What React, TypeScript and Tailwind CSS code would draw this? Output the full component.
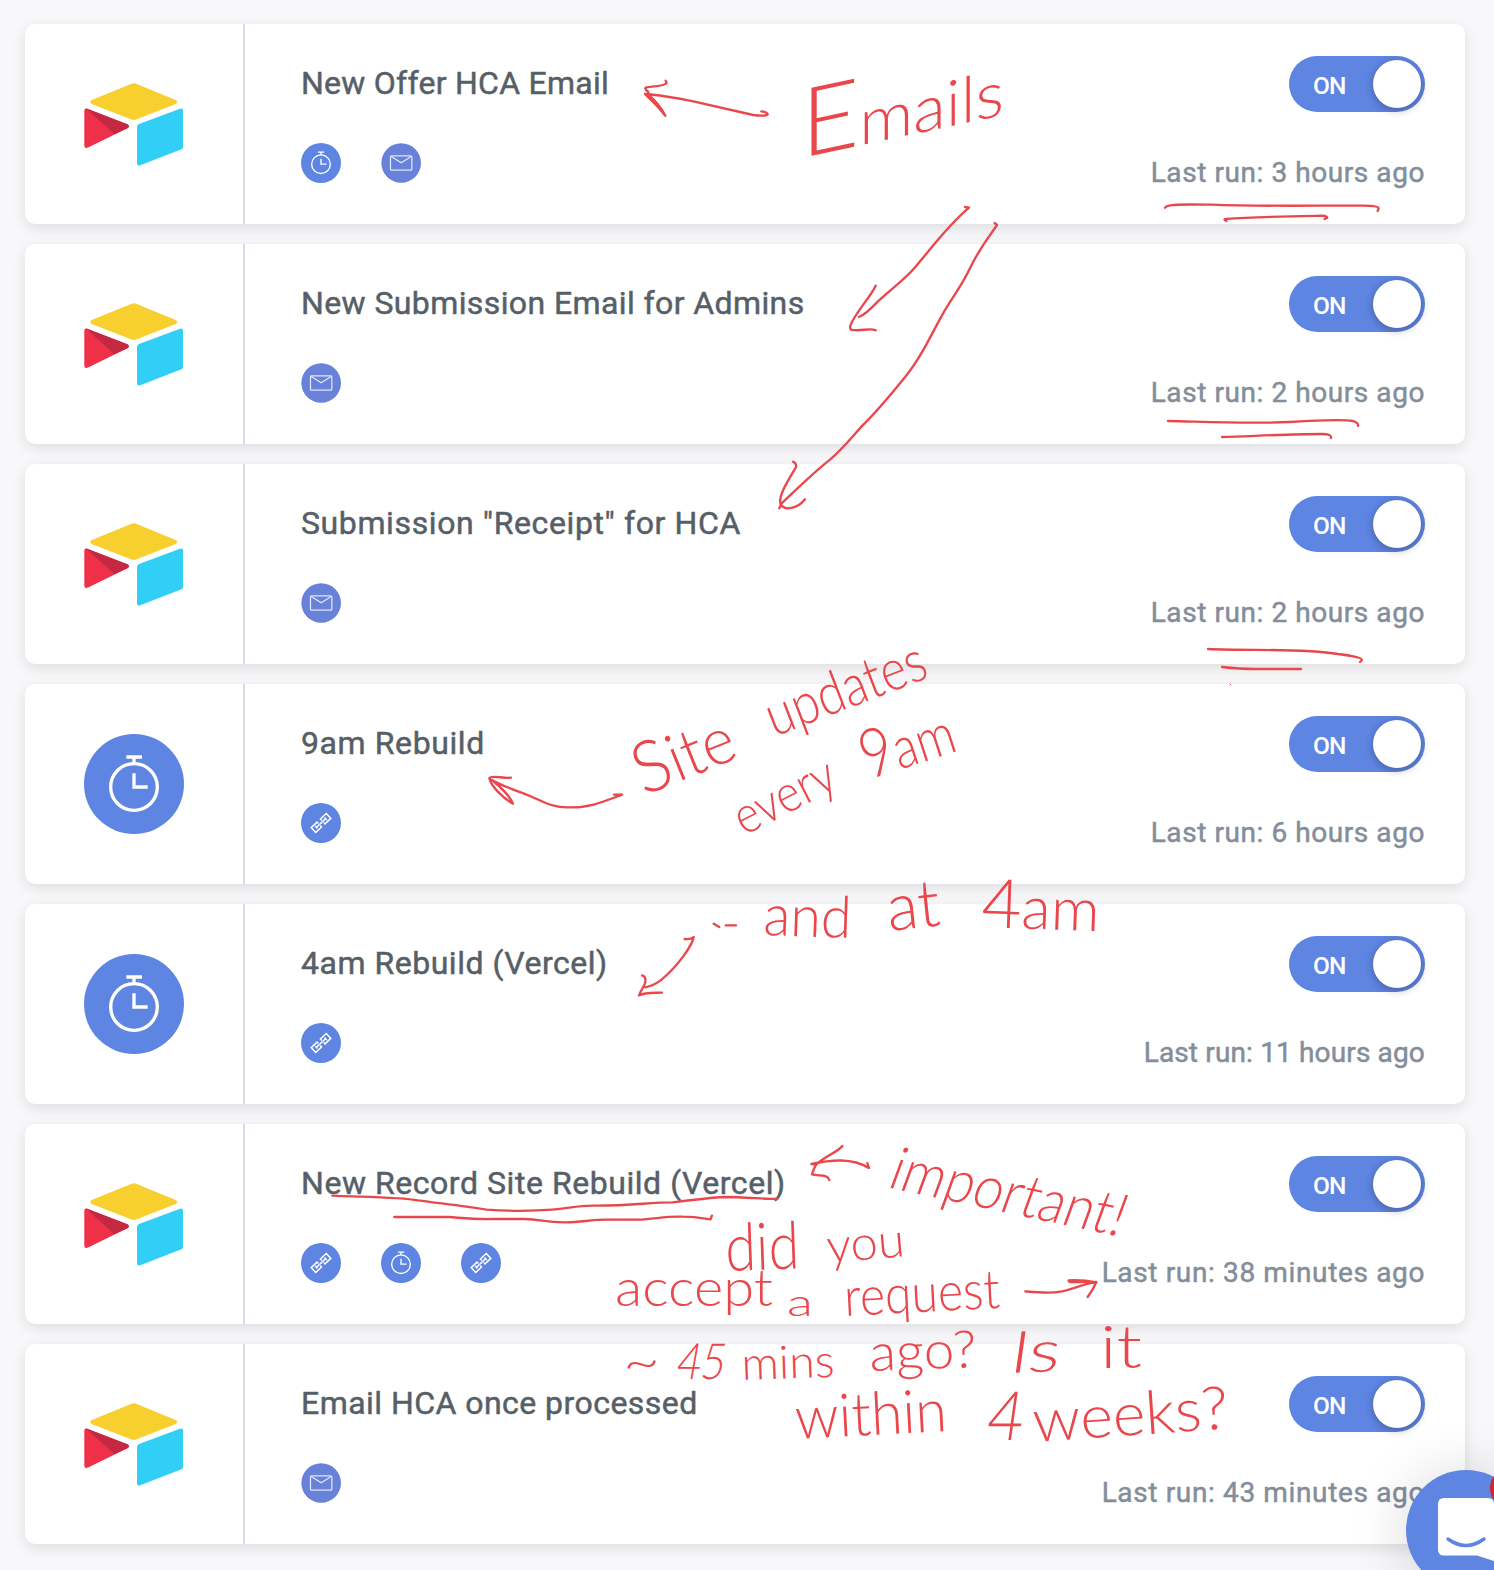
import React from "react";

type IconName = "timer" | "mail" | "link";

type Automation = {
  title: string;
  tracking: string;
  source: "airtable" | "timer";
  steps: IconName[];
  lastRun: string;
  runTracking: string;
};

const automations: Automation[] = [
  { title: "New Offer HCA Email", tracking: "tracking-[0.26px]", source: "airtable", steps: ["timer", "mail"], lastRun: "3 hours ago", runTracking: "tracking-[0.57px]" },
  { title: "New Submission Email for Admins", tracking: "tracking-[0.4px]", source: "airtable", steps: ["mail"], lastRun: "2 hours ago", runTracking: "tracking-[0.57px]" },
  { title: 'Submission "Receipt" for HCA', tracking: "tracking-[0.61px]", source: "airtable", steps: ["mail"], lastRun: "2 hours ago", runTracking: "tracking-[0.57px]" },
  { title: "9am Rebuild", tracking: "tracking-[0.6px]", source: "timer", steps: ["link"], lastRun: "6 hours ago", runTracking: "tracking-[0.57px]" },
  { title: "4am Rebuild (Vercel)", tracking: "tracking-[0.52px]", source: "timer", steps: ["link"], lastRun: "11 hours ago", runTracking: "tracking-[0.15px]" },
  { title: "New Record Site Rebuild (Vercel)", tracking: "tracking-[0.55px]", source: "airtable", steps: ["link", "timer", "link"], lastRun: "38 minutes ago", runTracking: "tracking-[0.64px]" },
  { title: "Email HCA once processed", tracking: "tracking-[0.46px]", source: "airtable", steps: ["mail"], lastRun: "43 minutes ago", runTracking: "tracking-[0.64px]" },
];

function AirtableLogo() {
  return (
    <svg className="mr-[2px] h-[85px] w-[101px]" viewBox="250 245 303 255">
      <path d="M394 251Q402 247 411 251L528 299Q537 305 528 311L411 357Q402 361 394 357L276 311Q267 305 276 299Z" fill="#f7d02f" />
      <path d="M412 380Q412 374 418 371L541 325Q550 322 550 331V440Q550 445 545 447L422 495Q412 498 412 489Z" fill="#31cff6" />
      <path d="M254 331Q254 322 263 325L383 372Q393 378 383 384L267 441Q254 446 254 436Z" fill="#ee3048" />
      <path d="M258 324L383 372Q393 378 383 384L344 402Z" fill="#c52843" />
    </svg>
  );
}

function TimerIcon({ className }: { className: string }) {
  return (
    <svg className={className} viewBox="72 42 300 300" fill="none" stroke="#fff" strokeWidth="10">
      <circle cx="222" cy="192" r="150" fill="#5f85e2" stroke="none" />
      <circle cx="222" cy="201" r="70" />
      <path d="M199 111H246M222 111V132M222 160V201H263" />
    </svg>
  );
}

function MailIcon({ className }: { className: string }) {
  return (
    <svg className={className} viewBox="1143.500 429 120 120" fill="none" stroke="#dfe5fa" strokeWidth="3.8">
      <circle cx="1204" cy="489" r="59.500" fill="#6882d9" stroke="none" />
      <rect x="1172" y="467.500" width="64" height="43" rx="3" />
      <path d="M1173 469L1204 488L1235 469" />
    </svg>
  );
}

function LinkIcon({ className }: { className: string }) {
  return (
    <svg className={className} viewBox="-60 -60 120 120" fill="none" stroke="#fff" strokeWidth="4.4">
      <circle r="60" fill="#5f85e2" stroke="none" />
      <g transform="rotate(-43)">
        <path d="M-7 -4V-10H-31V10H-7V4M7 -4V-10H31V10H7V4M-19 0H-6M6 0H19M-5 0H5" />
        <path d="M-19 -5V5M19 -5V5" />
      </g>
    </svg>
  );
}

function StepIcon({ name }: { name: IconName }) {
  if (name === "timer") return <TimerIcon className="size-10" />;
  if (name === "mail") return <MailIcon className="size-10" />;
  return <LinkIcon className="size-10" />;
}

function Toggle() {
  return (
    <div className="flex h-14 w-[136px] items-center justify-between rounded-full bg-[#5f85e2] pr-1 pl-6">
      <span className="pt-1 text-[24.5px] leading-none font-medium tracking-[-0.9px] text-white">ON</span>
      <span className="size-12 rounded-full bg-white shadow-[0_2px_8px_rgba(0,0,0,0.3)]" />
    </div>
  );
}

function AutomationCard({ item }: { item: Automation }) {
  return (
    <article className="flex h-[200px] rounded-[10px] bg-white shadow-[0_4px_14px_rgba(0,0,0,0.11)]">
      <div className="flex w-[220px] items-center justify-center border-r-2 border-[#d3dde5]">
        {item.source === "airtable" ? <AirtableLogo /> : <TimerIcon className="size-[100px]" />}
      </div>
      <div className="flex flex-1 justify-between pr-10 pl-14">
        <div className="flex flex-col pt-10">
          <h2 className={"h-[79px] text-[32px] leading-[38px] whitespace-nowrap text-[#565f68] [-webkit-text-stroke:0.5px_#565f68] " + item.tracking}>{item.title}</h2>
          <div className="flex gap-10">
            {item.steps.map((s, i) => (
              <StepIcon key={i} name={s} />
            ))}
          </div>
        </div>
        <div className="flex flex-col items-end pt-8">
          <Toggle />
          <p className={"mt-[44px] text-[28px] leading-[33px] whitespace-nowrap text-[#838e9a] [-webkit-text-stroke:0.5px_#838e9a] " + item.runTracking}>Last run: {item.lastRun}</p>
        </div>
      </div>
    </article>
  );
}

// "lead" enlarges the first letter; skewX and skewY slant the word.
type Note = { text: string; x: number; y: number; size: number; angle: number; width: number; lead?: number; skewX?: number; skewY?: number };

const notes: Note[] = [
  { text: "Emails", x: 801, y: 158, size: 64, angle: 0, width: 203, lead: 96, skewY: -12 },
  { text: "Site", x: 644, y: 796, size: 66, angle: -22, width: 104, lead: 72 },
  { text: "updates", x: 774, y: 737, size: 58, angle: -21, width: 168 },
  { text: "every", x: 744, y: 836, size: 52, angle: -27, width: 108 },
  { text: "9am", x: 868, y: 780, size: 58, angle: -18, width: 96, lead: 68 },
  { text: "and", x: 763, y: 935, size: 58, angle: 2, width: 88 },
  { text: "at", x: 889, y: 931, size: 66, angle: -6, width: 53 },
  { text: "4am", x: 981, y: 927, size: 60, angle: 2, width: 118, lead: 68 },
  { text: "important!", x: 886, y: 1187, size: 60, angle: 12, width: 238, skewX: -8 },
  { text: "did", x: 726, y: 1271, size: 66, angle: -2, width: 74 },
  { text: "you", x: 828, y: 1263, size: 48, angle: -5, width: 78 },
  { text: "accept", x: 615, y: 1306, size: 52, angle: 0, width: 158 },
  { text: "a", x: 787, y: 1316, size: 38, angle: 0, width: 26 },
  { text: "request", x: 845, y: 1316, size: 54, angle: -3, width: 156 },
  { text: "~", x: 623, y: 1379, size: 50, angle: 0, width: 37 },
  { text: "45", x: 675, y: 1379, size: 50, angle: 0, width: 48, skewX: -10 },
  { text: "mins", x: 742, y: 1380, size: 46, angle: -2, width: 93 },
  { text: "ago?", x: 870, y: 1371, size: 52, angle: -2, width: 107 },
  { text: "Is", x: 1008, y: 1373, size: 58, angle: -2, width: 50, skewX: -10 },
  { text: "it", x: 1100, y: 1368, size: 60, angle: 0, width: 42 },
  { text: "within", x: 796, y: 1439, size: 60, angle: -3, width: 152 },
  { text: "4", x: 985, y: 1440, size: 68, angle: 0, width: 36, skewX: -8 },
  { text: "weeks?", x: 1034, y: 1442, size: 60, angle: -4, width: 196 },
];

function Annotations() {
  return (
    <svg className="pointer-events-none absolute inset-0 h-[1570px] w-[1494px]" viewBox="0 0 1494 1570">
      <g fill="#ea474c" className="font-['Lato'] font-light">
        {notes.map((n, i) => (
          <text
            key={i}
            fontSize={n.size}
            textLength={n.width}
            lengthAdjust="spacingAndGlyphs"
            transform={`translate(${n.x} ${n.y}) rotate(${n.angle}) skewX(${n.skewX ?? 0}) skewY(${n.skewY ?? 0})`}
          >
            {n.lead ? (
              <>
                <tspan fontSize={n.lead}>{n.text[0]}</tspan>
                {n.text.slice(1)}
              </>
            ) : (
              n.text
            )}
          </text>
        ))}
      </g>
      <g fill="none" stroke="#ea474c" strokeLinecap="round" strokeLinejoin="round" strokeWidth="7">
        {/* arrow to the first card */}
        <g transform="translate(620 40) scale(0.33333)">
          <path d="M424 214Q440 216 443 223C438 228 415 227 400 225C350 214 290 200 220 184C170 174 120 165 75 162C95 182 120 204 136 227L82 163M85 163Q120 195 136 227M85 156Q70 144 80 142C100 139 135 138 140 129L137 122" />
        </g>
        {/* arrows to the second and third cards */}
        <g transform="translate(740 200) scale(0.33333)">
          <path d="M675 21L687 23C620 80 570 150 520 208C490 242 450 270 410 308Q375 345 357 351M407 257C390 294 345 338 331 377Q329 387 334 389C360 396 390 382 407 391" />
          <path d="M764 69L771 75C745 114 715 150 690 205C660 268 630 300 604 350C565 420 545 470 500 525C460 575 420 625 370 674C340 706 310 745 270 779C220 818 170 868 125 910L118 925M159 785Q170 790 168 801C150 834 112 888 122 913C136 934 173 926 195 898" />
        </g>
        {/* arrow to the 9am card */}
        <g transform="translate(470 630) scale(0.33333)">
          <path d="M432 494H456C390 519 360 532 300 532C250 534 228 519 180 498C140 482 95 468 66 450C90 470 120 498 129 521C100 505 62 468 58 444C72 435 98 446 123 443" />
        </g>
        {/* leading dashes and arrow to the 4am card */}
        <g transform="translate(620 850) scale(0.33333)">
          <path d="M281 221L298 231M317 226H348M194 267Q214 269 221 261C218 284 175 348 122 391Q100 407 76 412M66 376Q79 380 76 396C75 407 66 413 57 436C77 426 100 429 126 428" />
        </g>
        {/* arrows around the sixth card's notes */}
        <g transform="translate(780 1120) scale(0.33333)">
          <path d="M262 129L267 144C215 113 155 119 94 132L106 134M187 78C174 96 127 113 107 136Q99 151 96 163C115 169 142 161 148 180" />
          <path d="M736 514C770 517 810 521 841 515C880 508 908 491 949 487C920 481 892 480 866 481Q865 486 873 486H949Q940 508 923 531" />
        </g>
        {/* underlines below run times */}
        <g transform="translate(1130 20) scale(0.33333)">
          <path d="M105 563C110 552 155 553 245 554C400 560 580 556 700 557Q745 557 746 565L743 573M289 603Q277 597 290 597C370 590 480 590 575 587Q592 588 592 593L584 597" />
        </g>
        <g strokeWidth="2.3">
          <path d="M1168 421C1210 422 1250 424 1290 422Q1340 419 1353 421Q1359 423 1358 426M1222 437C1255 436 1290 434 1322 434Q1332 434 1331 438" />
          <path d="M1208 649C1250 651 1300 648 1338 654Q1362 657 1362 660L1360 662M1222 667Q1240 669 1255 669H1301" />
          <path d="M1230 684L1231 685" strokeWidth="1" />
        </g>
        {/* underlines below the sixth title */}
        <g transform="translate(280 1160) scale(0.3444 0.33333)">
          <path d="M152 107C240 111 350 111 400 121C480 132 540 139 600 149C660 153 740 153 790 149C840 145 860 137 910 137C1020 138 1070 127 1140 127C1210 118 1250 113 1290 111C1350 111 1430 119 1444 116M332 171H490C540 175 570 179 620 177H710C760 178 770 188 830 187C880 186 900 179 950 179H1040C1090 177 1120 168 1170 170C1220 170 1240 179 1250 178L1254 167" />
        </g>
      </g>
    </svg>
  );
}

function ChatLauncher() {
  return (
    <button aria-label="Open chat" className="absolute right-[-32px] bottom-[-20px] size-[120px] rounded-full bg-[#5f85e2] shadow-[0_4px_60px_rgba(0,0,0,0.16)]">
      <svg className="size-full" viewBox="1406 1470 120 120">
        <path d="M1444 1498H1488Q1494 1498 1494 1504V1561L1477 1555.5H1444Q1438 1555.5 1438 1549.500V1504Q1438 1498 1444 1498Z" fill="#fff" />
        <path d="M1448 1539Q1466 1552 1484 1539" fill="none" stroke="#5f85e2" strokeWidth="3.4" strokeLinecap="round" />
        <circle cx="1510" cy="1488" r="20" fill="#d2232c" />
      </svg>
    </button>
  );
}

export default function App() {
  return (
    <main className="relative h-[1570px] w-[1494px] overflow-hidden bg-[#f8f8fb] font-['Roboto',sans-serif]">
      <div className="flex flex-col gap-5 pt-6 pr-[29px] pl-[25px]">
        {automations.map((item) => (
          <AutomationCard key={item.title} item={item} />
        ))}
      </div>
      <Annotations />
      <ChatLauncher />
    </main>
  );
}
